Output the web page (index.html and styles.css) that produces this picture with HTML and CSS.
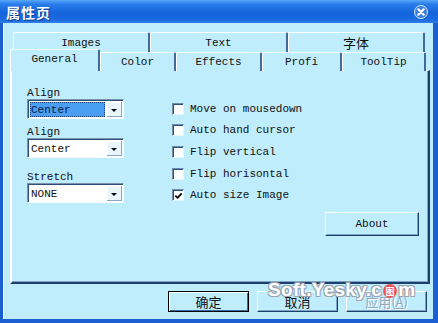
FILE: index.html
```html
<!DOCTYPE html>
<html lang="zh">
<head>
    <meta charset="UTF-8" />
    <title>属性页</title>
    <link rel="stylesheet" href="styles.css">
</head>
<body>
    <div class="window">
        <div class="titlebar">
            <span class="title">属性页</span>
            <span class="close">
                <svg width="14" height="14" viewBox="0 0 14 14">
                    <circle cx="7" cy="7" r="6.5" fill="#3c7fe0" stroke="#dbe9fb" stroke-width="1"/>
                    <path d="M4.3 4.3 L9.7 9.7 M9.7 4.3 L4.3 9.7" stroke="#fff" stroke-width="2.2" stroke-linecap="round"/>
                </svg>
            </span>
        </div>

        <div class="client">
            <div class="tab-row back">
                <div class="tab">Images</div>
                <div class="tab">Text</div>
                <div class="tab cjk">字体</div>
            </div>
            <div class="tab-row front">
                <div class="tab active">General</div>
                <div class="tab">Color</div>
                <div class="tab">Effects</div>
                <div class="tab">Profi</div>
                <div class="tab">ToolTip</div>
            </div>

            <div class="panel">
                <div class="col-left">
                    <div class="field first">
                        <div class="label">Align</div>
                        <div class="select">
                            <span class="value focused">Center</span>
                            <span class="arrow"></span>
                        </div>
                    </div>
                    <div class="field second">
                        <div class="label">Align</div>
                        <div class="select">
                            <span class="value">Center</span>
                            <span class="arrow"></span>
                        </div>
                    </div>
                    <div class="field third">
                        <div class="label">Stretch</div>
                        <div class="select">
                            <span class="value">NONE</span>
                            <span class="arrow"></span>
                        </div>
                    </div>
                </div>

                <div class="col-right">
                    <div class="check"><span class="box"></span>Move on mousedown</div>
                    <div class="check"><span class="box"></span>Auto hand cursor</div>
                    <div class="check"><span class="box"></span>Flip vertical</div>
                    <div class="check"><span class="box"></span>Flip horisontal</div>
                    <div class="check"><span class="box checked">
                        <svg width="10" height="10" viewBox="0 0 10 10"><path d="M1.5 4.5 L4 7 L8.5 2" fill="none" stroke="#000" stroke-width="2"/></svg>
                    </span>Auto size Image</div>
                    <div class="btn about">About</div>
                </div>
            </div>

            <div class="buttons">
                <div class="btn default cjk">确定</div>
                <div class="btn cjk">取消</div>
                <div class="btn disabled cjk">应用(<u>A</u>)</div>
            </div>

            <div class="watermark">Soft.Yesky.c<span class="wm-o">图</span>m</div>
        </div>
    </div>
</body>
</html>
```

FILE: styles.css
```css
:root {
    --bg: #bfedfc;
    --frame: #1a5fd2;
    --shadow: #3f6c9c;
    --dark: #1d3f6e;
    --text: #111;
}
body {
    margin: 0;
    width: 438px;
    height: 323px;
    overflow: hidden;
    font-family: "Liberation Mono", monospace;
    font-size: 11px;
    color: var(--text);
}
.cjk {
    font-family: "Noto Sans CJK SC", sans-serif;
}
.window {
    width: 438px;
    height: 323px;
    display: flex;
    flex-direction: column;
    background: var(--frame);
}

/* Titelleiste */
.titlebar {
    height: 23px;
    flex: none;
    display: flex;
    align-items: center;
    justify-content: space-between;
    padding: 0 10px 0 6px;
    background: linear-gradient(to bottom, #58a8fa 0%, #2a7cea 18%, #1464dc 55%, #1a6ae0 85%, #2f7ee8 100%);
}
.title {
    font-family: "Noto Sans CJK SC", sans-serif;
    font-weight: bold;
    font-size: 14px;
    color: #fff;
    text-shadow: 1px 1px 0 #0b3c8c;
    letter-spacing: 1px;
}
.close {
    display: flex;
    margin-top: 1px;
}

/* Inhalt */
.client {
    flex: 1;
    position: relative;
    margin: 0 5px 4px 3px;
    background: var(--bg);
    box-shadow: inset 1px 0 0 #e8fbff;
}

.tab-row {
    display: grid;
    height: 18px;
}
.tab-row.back {
    margin: 9px 0 0 10px;
    grid-template-columns: 137px 138px 137px;
}
.tab-row.front {
    margin-left: 7px;
    height: 20px;
    grid-template-columns: 90px 76px 86px 80px 84px;
}
.tab {
    display: flex;
    align-items: center;
    justify-content: center;
    border-top: 1px solid #fff;
    border-left: 1px solid #fff;
    border-right: 2px solid var(--shadow);
    border-radius: 2px 2px 0 0;
    background: var(--bg);
    box-sizing: border-box;
}
.tab.cjk {
    font-size: 13px;
}
.front .tab {
    margin-top: 2px;
}
.front .tab:not(.active):first-child + .tab {
    border-left: none;
}
.front .tab.active {
    margin-top: -1px;
    height: 22px;
    padding-bottom: 3px;
    position: relative;
    z-index: 1;
}

.panel {
    margin-left: 7px;
    width: 420px;
    height: 214px;
    box-sizing: border-box;
    border-top: 1px solid #fff;
    border-left: 2px solid #fff;
    border-right: 2px solid var(--dark);
    border-bottom: 2px solid var(--dark);
    box-shadow: inset -1px -1px 0 #7fa4c8;
    display: grid;
    grid-template-columns: 145px 1fr;
    padding: 0 9px 0 15px;
}

/* linke Spalte */
.label {
    line-height: 11px;
}
.field.first { margin-top: 17px; }
.field.second { margin-top: 8px; }
.field.third { margin-top: 14px; }
.select {
    width: 97px;
    height: 20px;
    box-sizing: border-box;
    display: flex;
    background: #fff;
    border-top: 1px solid #7b93ad;
    border-left: 1px solid #7b93ad;
    border-right: 1px solid #f4fcff;
    border-bottom: 1px solid #f4fcff;
    box-shadow: inset 1px 1px 0 #2d4e78;
    padding: 2px 1px 1px 2px;
}
.value {
    flex: 1;
    display: flex;
    align-items: center;
    padding-left: 1px;
}
.value.focused {
    background: #4b9ff2;
    outline: 1px dotted #1a3f70;
    outline-offset: -1px;
    color: #0a1a40;
}
.arrow {
    width: 15px;
    margin-left: 2px;
    background: #e9f7fd;
    box-shadow: inset -1px -1px 0 #8aa6c2, inset 1px 1px 0 #fff;
    position: relative;
}
.arrow::after {
    content: "";
    position: absolute;
    left: 4px;
    top: 7px;
    border-left: 3px solid transparent;
    border-right: 3px solid transparent;
    border-top: 3px solid #000;
}

/* rechte Spalte */
.col-right {
    padding-top: 27px;
    display: flex;
    flex-direction: column;
}
.check {
    height: 21.6px;
    display: flex;
    align-items: center;
    gap: 6px;
}
.box {
    width: 12px;
    height: 12px;
    box-sizing: border-box;
    background: #fff;
    border-top: 1px solid #6f8aa8;
    border-left: 1px solid #6f8aa8;
    border-right: 1px solid #e4f6fd;
    border-bottom: 1px solid #e4f6fd;
    box-shadow: inset 1px 1px 0 #31547f;
    display: flex;
    align-items: center;
    justify-content: center;
}
.box svg {
    margin: 1px 0 0 1px;
}

.btn {
    display: flex;
    align-items: center;
    justify-content: center;
    box-sizing: border-box;
    background: var(--bg);
    border-top: 1px solid #fff;
    border-left: 1px solid #fff;
    border-right: 1px solid var(--dark);
    border-bottom: 1px solid var(--dark);
    box-shadow: inset -1px -1px 0 #7fa4c8;
}
.about {
    align-self: flex-end;
    width: 94px;
    height: 24px;
    margin-top: 6px;
}

/* untere Schaltflächen */
.buttons {
    display: flex;
    gap: 8px;
    margin: 7px 0 0 165px;
}
.buttons .btn {
    width: 81px;
    height: 21px;
    font-size: 13px;
}
.btn.default {
    border: 1px solid #000;
    box-shadow: inset 1px 1px 0 #fff, inset -1px -1px 0 var(--shadow);
}
.btn.disabled {
    color: #8ea8bf;
    text-shadow: 1px 1px 0 #fff;
}

/* Wasserzeichen über dem Bild */
.watermark {
    position: absolute;
    left: 265px;
    top: 256px;
    font-family: "Liberation Sans", sans-serif;
    font-weight: bold;
    font-size: 19px;
    color: #fff;
    letter-spacing: 0.3px;
    text-shadow: -1px -1px 0 #9aa4ad, 1px -1px 0 #9aa4ad, -1px 1px 0 #9aa4ad, 1px 1px 0 #9aa4ad;
    display: flex;
    align-items: center;
}
.wm-o {
    display: inline-flex;
    align-items: center;
    justify-content: center;
    width: 14px;
    height: 14px;
    margin: 2px 1px 0;
    border-radius: 50%;
    background: #e8585a;
    font-family: "Noto Sans CJK SC", sans-serif;
    font-size: 9px;
    text-shadow: none;
}
```
